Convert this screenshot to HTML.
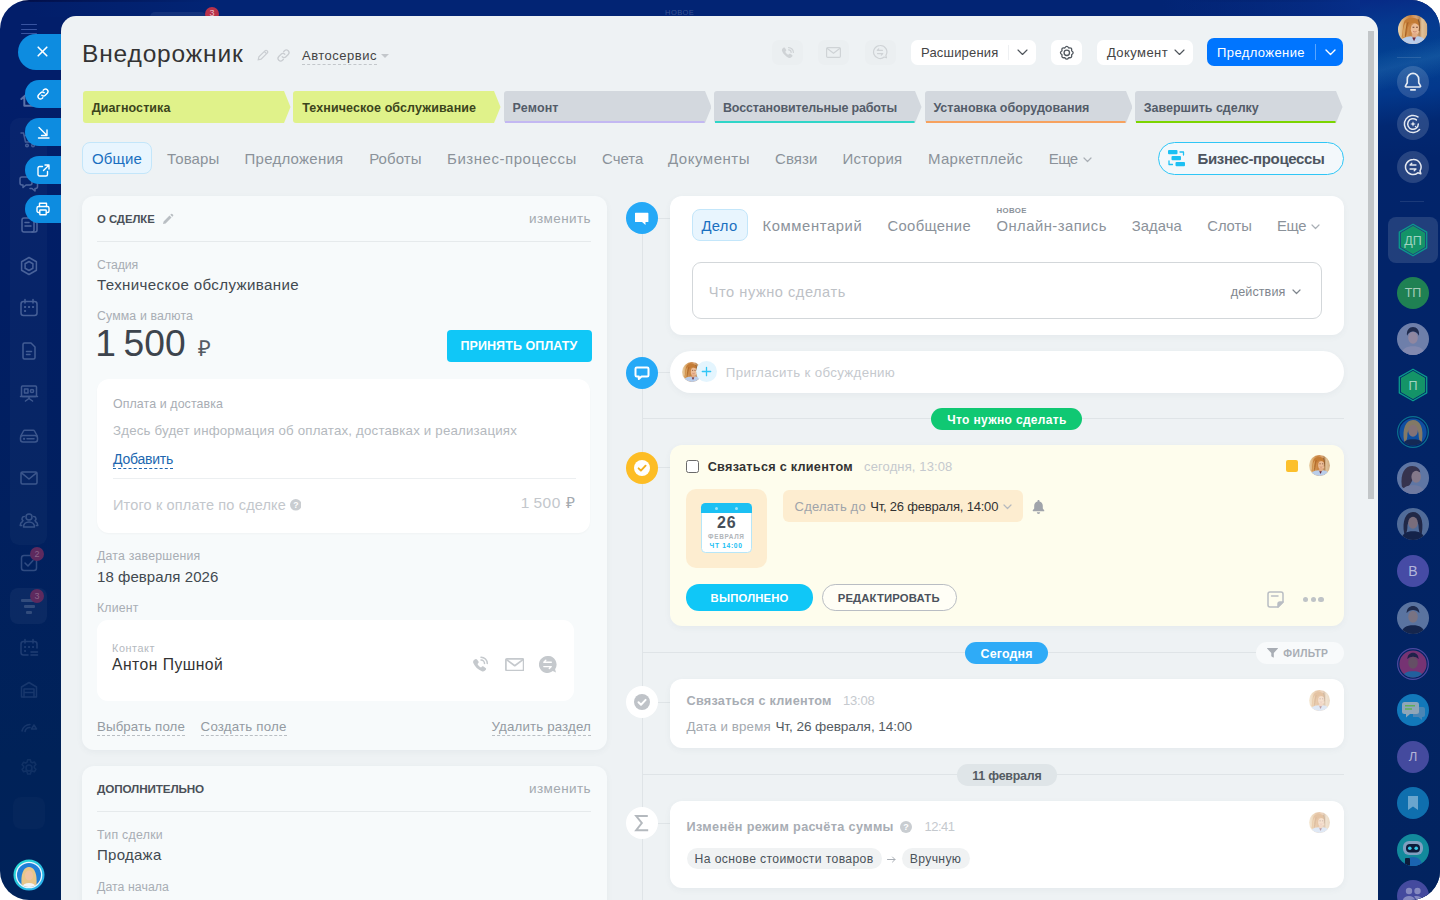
<!DOCTYPE html>
<html lang="ru">
<head>
<meta charset="utf-8">
<title>Внедорожник</title>
<style>
*{box-sizing:border-box;margin:0;padding:0}
html,body{width:1440px;height:900px;overflow:hidden;background:#fff;font-family:"Liberation Sans",sans-serif;}
.a{position:absolute}
.t{position:absolute;white-space:nowrap;line-height:1}
#shell{position:absolute;left:0;top:0;width:1440px;height:900px;border-radius:29px;overflow:hidden;
 background:linear-gradient(180deg,#020f4a 0,#020f4a 1px,#021e6a 2.500px,#021e6a 100px,#011e64 300px,#01205f 520px,#002258 760px,#00225a 900px);}
#rside{position:absolute;left:1360px;top:0;width:80px;height:900px;
 background:linear-gradient(166deg,rgba(255,255,255,0) 6.200%,rgba(90,170,220,.17) 8.200%,rgba(255,255,255,0) 10.500%),linear-gradient(174deg,#072a86 0,#053a90 28px,#024191 62px,#03388c 96px,#022872 128px,#02246b 165px,#022467 400px,#02235f 900px);}
#panel{position:absolute;left:61px;top:16px;width:1317px;height:900px;background:#eef2f4;border-radius:15px 15px 0 0;overflow:hidden}
/* everything inside panel positioned in page coords via offset wrapper */
#pin{position:absolute;left:-61px;top:-16px;width:1440px;height:900px}
.card{position:absolute;border-radius:12px}
.lcard{background:#f7fafb}
.wcard{background:#fff}
.lbl{color:#a8adb4;font-size:12.5px}
.val{color:#333;font-size:15px}
.dash{border-bottom:1px dashed currentColor}
</style>
</head>
<body>
<div id="shell">
<div class="a" style="left:10px;top:118px;width:37px;height:427px;background:rgba(255,255,255,.028);border-radius:9px;"></div>
<div class="a" style="left:30px;top:0;width:1360px;height:17px;background:linear-gradient(90deg,rgba(2,36,116,0),#022474 180px,#022474 1150px,rgba(2,36,116,0)),linear-gradient(180deg,#020f4a 0,#020f4a 1px,rgba(2,15,74,0) 2.500px)"></div>
<div class="a" style="left:1162px;top:0;width:198px;height:17px;background:linear-gradient(90deg,rgba(6,46,137,0),#062e89)"></div>
<div class="a" style="left:150px;top:11.5px;width:56px;height:10px;background:rgba(255,255,255,.07);border-radius:5px;"></div>
<div class="a" style="left:205px;top:7px;width:14px;height:14px;border-radius:7px;background:#b8324a;color:rgba(255,255,255,.7);font-size:9px;line-height:13px;text-align:center">3</div>
<div class="t" style="left:665px;top:8.500px;font-size:7.500px;letter-spacing:.5px;color:rgba(255,255,255,.22)">НОВОЕ</div>
<div class="a" style="left:21px;top:23.9px;width:16px;height:1.1px;background:rgba(130,160,235,.42);border-radius:1px;"></div>
<div class="a" style="left:21px;top:28.5px;width:16px;height:1.1px;background:rgba(130,160,235,.42);border-radius:1px;"></div>
<div class="a" style="left:21px;top:33.1px;width:16px;height:1.1px;background:rgba(130,160,235,.42);border-radius:1px;"></div>
<svg class="a" style="left:20.0px;top:89.5px;opacity:0.5" width="18" height="18" viewBox="0 0 20 20" fill="none" stroke="#b5c8ea" stroke-width="2.2" stroke-linecap="round" stroke-linejoin="round"><path d="M1.500 10L10 2.500l8.500 7.500M4.800 8.500V17.500h10.400V8.500"/></svg>
<svg class="a" style="left:19.0px;top:130.0px;opacity:0.35" width="20" height="20" viewBox="0 0 20 20" fill="none" stroke="#b5c8ea" stroke-width="1.5" stroke-linecap="round" stroke-linejoin="round"><path d="M2 3h2.500l2 9h9l1.500-6.500H6"/><circle cx="8" cy="15.500" r="1.300"/><circle cx="14" cy="15.500" r="1.300"/></svg>
<svg class="a" style="left:19.0px;top:173.0px;opacity:0.4" width="20" height="20" viewBox="0 0 20 20" fill="none" stroke="#b5c8ea" stroke-width="1.5" stroke-linecap="round" stroke-linejoin="round"><path d="M3 4h8a2 2 0 0 1 2 2v4a2 2 0 0 1-2 2H7l-3 2.500V12H3a2 2 0 0 1-2-2V6a2 2 0 0 1 2-2z"/><path d="M15 8h1.500a2 2 0 0 1 2 2v3.500a2 2 0 0 1-2 2h-.5V18l-3-2.500h-2"/></svg>
<svg class="a" style="left:19.0px;top:215.0px;opacity:0.4" width="20" height="20" viewBox="0 0 20 20" fill="none" stroke="#b5c8ea" stroke-width="1.5" stroke-linecap="round" stroke-linejoin="round"><rect x="3" y="3" width="12" height="14" rx="2"/><path d="M6 7.500h4M6 11h6M15 7h1.500a1.500 1.500 0 0 1 1.500 1.500V15a2 2 0 0 1-2 2h-3"/></svg>
<svg class="a" style="left:19.0px;top:256.0px;opacity:0.38" width="20" height="20" viewBox="0 0 20 20" fill="none" stroke="#b5c8ea" stroke-width="1.5" stroke-linecap="round" stroke-linejoin="round"><path d="M10 1.500l7.400 4.250v8.500L10 18.500l-7.400-4.250v-8.500z"/><path d="M10 5.500l3.900 2.250v4.500L10 14.500l-3.900-2.250v-4.500z"/></svg>
<svg class="a" style="left:19.0px;top:298.0px;opacity:0.36" width="20" height="20" viewBox="0 0 20 20" fill="none" stroke="#b5c8ea" stroke-width="1.5" stroke-linecap="round" stroke-linejoin="round"><rect x="2" y="3.500" width="16" height="14" rx="2.500"/><path d="M6 1.500v3.500M14 1.500v3.500"/><path d="M6 9h.1M10 9h.1M14 9h.1M6 13h.1" stroke-width="2.200"/></svg>
<svg class="a" style="left:19.0px;top:341.0px;opacity:0.34" width="20" height="20" viewBox="0 0 20 20" fill="none" stroke="#b5c8ea" stroke-width="1.5" stroke-linecap="round" stroke-linejoin="round"><path d="M5.500 2h6.500l4 4v10.500a1.500 1.500 0 0 1-1.500 1.500h-9A1.500 1.500 0 0 1 4 16.500v-13A1.500 1.500 0 0 1 5.500 2z"/><path d="M7.500 10.500h5M7.500 13.500h3.500"/></svg>
<svg class="a" style="left:19.0px;top:383.0px;opacity:0.32" width="20" height="20" viewBox="0 0 20 20" fill="none" stroke="#b5c8ea" stroke-width="1.5" stroke-linecap="round" stroke-linejoin="round"><rect x="2.500" y="3" width="15" height="10.500" rx="1"/><path d="M1.500 13.500h17M10 13.500v2M6.500 18l3.500-2.500 3.500 2.500"/><rect x="5.500" y="6" width="3.500" height="4"/><circle cx="13" cy="8" r="1.600"/></svg>
<svg class="a" style="left:19.0px;top:426.0px;opacity:0.3" width="20" height="20" viewBox="0 0 20 20" fill="none" stroke="#b5c8ea" stroke-width="1.5" stroke-linecap="round" stroke-linejoin="round"><path d="M2 9.500l2.500-4.500a1.500 1.500 0 0 1 1.300-.8h8.400a1.500 1.500 0 0 1 1.300.8L18 9.500"/><rect x="1.500" y="9.500" width="17" height="6.500" rx="2.500"/><path d="M5 12.800h.1" stroke-width="2.200"/><path d="M8 12.800h7"/></svg>
<svg class="a" style="left:19.0px;top:468.0px;opacity:0.3" width="20" height="20" viewBox="0 0 20 20" fill="none" stroke="#b5c8ea" stroke-width="1.5" stroke-linecap="round" stroke-linejoin="round"><rect x="2" y="4" width="16" height="12" rx="1.500"/><path d="M2.500 4.800L10 11l7.500-6.200"/></svg>
<svg class="a" style="left:19.0px;top:510.0px;opacity:0.28" width="20" height="20" viewBox="0 0 20 20" fill="none" stroke="#b5c8ea" stroke-width="1.5" stroke-linecap="round" stroke-linejoin="round"><circle cx="10" cy="7" r="3"/><path d="M4.500 17c0-3 2.400-5 5.500-5s5.500 2 5.500 5z"/><path d="M5.300 6.500A2.300 2.300 0 0 0 4 10.700M3.500 11.500c-1.500.8-2.300 2.200-2.300 4h1.500M14.700 6.500a2.300 2.300 0 0 1 1.300 4.200M16.500 11.500c1.500.8 2.300 2.200 2.300 4h-1.500"/></svg>
<svg class="a" style="left:19.0px;top:553.0px;opacity:0.26" width="20" height="20" viewBox="0 0 20 20" fill="none" stroke="#b5c8ea" stroke-width="1.5" stroke-linecap="round" stroke-linejoin="round"><rect x="2.500" y="2.500" width="15" height="15" rx="2.500"/><path d="M6 10l3 3 5-5.500"/></svg>
<div class="a" style="left:30px;top:546.500px;width:14px;height:14px;border-radius:7px;background:#5e2a5e;color:rgba(255,255,255,.28);font-size:9px;line-height:14px;text-align:center">2</div>
<div class="a" style="left:10.3px;top:587.5px;width:37.2px;height:36px;background:rgba(255,255,255,.045);border-radius:8px;"></div>
<div class="a" style="left:21px;top:599.2px;width:16px;height:2.4px;background:rgba(255,255,255,.16);border-radius:1px;"></div>
<div class="a" style="left:23.5px;top:605.2px;width:11px;height:2.4px;background:rgba(255,255,255,.16);border-radius:1px;"></div>
<div class="a" style="left:26px;top:611.2px;width:6px;height:2.4px;background:rgba(255,255,255,.16);border-radius:1px;"></div>
<div class="a" style="left:30px;top:589px;width:14px;height:14px;border-radius:7px;background:#5e2a5e;color:rgba(255,255,255,.28);font-size:9px;line-height:14px;text-align:center">3</div>
<svg class="a" style="left:19.0px;top:638.0px;opacity:0.17" width="20" height="20" viewBox="0 0 20 20" fill="none" stroke="#b5c8ea" stroke-width="1.5" stroke-linecap="round" stroke-linejoin="round"><path d="M9 17H4.500A2.500 2.500 0 0 1 2 14.500V6a2.500 2.500 0 0 1 2.500-2.500h11A2.500 2.500 0 0 1 18 6v4"/><path d="M6 1.500v3.500M14 1.500v3.500M12 14h6.500M12 17h6.500"/><path d="M6 9h.1M10 9h.1M14 9h.1M6 13h.1" stroke-width="2"/></svg>
<svg class="a" style="left:19.0px;top:680.0px;opacity:0.13" width="20" height="20" viewBox="0 0 20 20" fill="none" stroke="#b5c8ea" stroke-width="1.5" stroke-linecap="round" stroke-linejoin="round"><path d="M2.500 17V7L10 2.500 17.500 7v10z"/><path d="M5 17V9h10v8M5 12.500h10"/></svg>
<svg class="a" style="left:19.0px;top:717.0px;opacity:0.12" width="20" height="20" viewBox="0 0 20 20" fill="none" stroke="#b5c8ea" stroke-width="1.5" stroke-linecap="round" stroke-linejoin="round"><path d="M3 14a8 8 0 0 1 8-6.500M6 14.500a5 5 0 0 1 5-4"/><path d="M15 8l-2.500 4h5z"/></svg>
<svg class="a" style="left:19.0px;top:758.0px;opacity:0.09" width="20" height="20" viewBox="0 0 20 20" fill="none" stroke="#b5c8ea" stroke-width="1.5" stroke-linecap="round" stroke-linejoin="round"><circle cx="10" cy="10" r="3"/><path d="M8.600 1.800h2.800l.5 2.200 1.400.8 2.100-.8 1.500 2.500-1.600 1.500v1.800l1.600 1.500-1.500 2.500-2.100-.8-1.400.8-.5 2.200H8.600l-.5-2.200-1.400-.8-2.100.8-1.500-2.500 1.600-1.500V8.200L3.100 6.700l1.500-2.500 2.100.8 1.400-.8z"/></svg>
<div class="a" style="left:13px;top:797px;width:32px;height:32px;background:rgba(255,255,255,.02);border-radius:8px;"></div>
<svg class="a" style="left:13px;top:858.500px" width="32" height="32" viewBox="0 0 32 32"><defs><clipPath id="lav"><circle cx="16" cy="16" r="12"/></clipPath><linearGradient id="lring" x1="0" y1="0" x2="1" y2="1"><stop offset="0" stop-color="#27e0d0"/><stop offset="1" stop-color="#2aa8f0"/></linearGradient></defs><circle cx="16" cy="16" r="15.500" fill="url(#lring)"/><circle cx="16" cy="16" r="13.300" fill="#eaf6ff"/><g clip-path="url(#lav)"><rect width="32" height="32" fill="#1f7fd8"/><path d="M9 30C7 16 10 8 16 8s9 8 7 22z" fill="#e8c68a"/><ellipse cx="16" cy="16.500" rx="4" ry="5" fill="#efc3a2"/><path d="M8 32c0-5 3-8 8-8s8 3 8 8z" fill="#f4f4f6"/></g></svg>

<div id="rside"><svg class="a" style="left:38.40px;top:14.60px;opacity:1;border-radius:50%;overflow:hidden" width="29.2" height="29.2" viewBox="0 0 40 40"><defs><filter id="gb1" x="-20%" y="-20%" width="140%" height="140%"><feGaussianBlur stdDeviation="0.65"/></filter><linearGradient id="gg1" x1="0" x2="1" y1="0" y2="0"><stop offset="0" stop-color="#ead3ad"/><stop offset=".18" stop-color="#dcae72"/><stop offset=".42" stop-color="#c9823f"/><stop offset=".62" stop-color="#d9a473"/><stop offset=".74" stop-color="#b98a5a"/><stop offset=".82" stop-color="#e0c29a"/><stop offset="1" stop-color="#d2ad80"/></linearGradient></defs><rect width="40" height="40" fill="url(#gg1)"/><g filter="url(#gb1)"><path d="M9 8c4-5 14-6 19-1 2 3 2 8 1 12l-3-6c-3-3-8-3-11 1-2 4-2 9-3 14-1 3-5 4-7 2 2-6 1-15 4-22z" fill="#c47b36"/><path d="M6 30c1-8 1-16 5-20 1 6-1 14 1 21z" fill="#d9a35f"/><ellipse cx="23.500" cy="19.500" rx="6" ry="7.800" fill="#ecbd97"/><path d="M19.500 25h7v6h-7z" fill="#e2ac86"/><path d="M2 41c1-8 7-11.500 16-12l4 3 5-3c7 .5 11 4 12 12z" fill="#b9cdea"/><path d="M19.500 31l2.500 5 2.500-5z" fill="#6a2a40"/><path d="M20.500 22.300c1.500 1.200 3.500 1.200 5 0" stroke="#b5655a" stroke-width=".9" fill="none"/><path d="M20 16.800h2.400M24.800 16.800h2.400" stroke="#6a4030" stroke-width="1.300"/><path d="M27.500 6c2 4 2.500 10 1.500 16" stroke="#8a5a30" stroke-width="1.600" fill="none"/><path d="M14 10c-3 5-3 12-4 20" stroke="#a86428" stroke-width="1.500" fill="none"/></g></svg>
<div class="a" style="left:36.5px;top:57px;width:24px;height:1px;background:rgba(255,255,255,.12);border-radius:0px;"></div>
<div class="a" style="left:37px;top:66px;width:32px;height:32px;background:rgba(255,255,255,.15);border-radius:16px;"></div>
<svg class="a" style="left:42px;top:70.500px" width="22" height="22" viewBox="0 0 20 20" stroke="rgba(255,255,255,.88)" fill="none" stroke-width="1.500" stroke-linecap="round" stroke-linejoin="round"><path d="M10 2.200a5.200 5.200 0 0 0-5.200 5.200v3.300L3.200 13.500c-.3.500 0 1 .6 1h12.400c.6 0 .9-.5.600-1l-1.600-2.800V7.400A5.200 5.200 0 0 0 10 2.200zM8 17.200h4"/></svg>
<div class="a" style="left:37px;top:108.2px;width:32px;height:32px;background:rgba(255,255,255,.15);border-radius:16px;"></div>
<svg class="a" style="left:41px;top:112.200px" width="24" height="24" viewBox="0 0 24 24" stroke="rgba(255,255,255,.88)" fill="none" stroke-width="1.500" stroke-linecap="round" stroke-linejoin="round"><path d="M16.930 4.960A8.600 8.600 0 1 0 18.590 17.530"/><path d="M15.410 7.940A5.300 5.300 0 1 0 17.300 12"/><path d="M12 9.200l.8 2 2 .8-2 .8-.8 2-.8-2-2-.8 2-.8z" fill="rgba(255,255,255,.88)" stroke="none"/><circle cx="14.500" cy="14.400" r=".75" fill="rgba(255,255,255,.88)" stroke="none"/></svg>
<div class="a" style="left:37px;top:150.7px;width:32px;height:32px;background:rgba(255,255,255,.15);border-radius:16px;"></div>
<svg class="a" style="left:43px;top:156.700px" width="20" height="20" viewBox="0 0 20 20" stroke="rgba(255,255,255,.88)" fill="none" stroke-width="1.500" stroke-linecap="round" stroke-linejoin="round"><path d="M10 2.500a7.500 7.500 0 1 0 4.800 13.300l3 1-.8-3A7.500 7.500 0 0 0 10 2.500z"/><path d="M13 8H7l1.800-1.800M7 12h6l-1.800 1.800" stroke-width="1.300"/></svg>
<div class="a" style="left:40px;top:201px;width:24px;height:1px;background:rgba(255,255,255,.1);border-radius:0px;"></div>
<div class="a" style="left:28px;top:216.7px;width:49.7px;height:46.6px;background:rgba(255,255,255,.125);border-radius:8px;"></div>
<svg class="a" style="left:36px;top:223px" width="34" height="34" viewBox="0 0 34 34"><path d="M17 1.200l13.700 7.900v15.800L17 32.800 3.300 24.900V9.100z" fill="none" stroke="#0b9a8c" stroke-width="1.300" stroke-linejoin="round"/><path d="M17 4.600l10.700 6.200v12.400L17 29.400 6.300 23.200V10.800z" fill="#149468" stroke="#149468" stroke-width="3" stroke-linejoin="round"/><text x="17" y="21.500" font-size="12.500" text-anchor="middle" fill="rgba(255,255,255,.6)" font-family="Liberation Sans, sans-serif">ДП</text></svg>
<div class="a" style="left:37px;top:276.5px;width:32px;height:32px;border-radius:16px;background:#1f8153;color:rgba(255,255,255,.6);font-size:12.5px;line-height:32px;text-align:center">ТП</div>
<svg class="a" style="left:37px;top:323.2px;opacity:0.72" width="32" height="32" viewBox="0 0 40 40"><defs><clipPath id="r1"><circle cx="20" cy="20" r="20"/></clipPath></defs><g clip-path="url(#r1)"><rect width="40" height="40" fill="#98a2c4"/><path d="M12.500 16c-1-7 3-11 7.500-11s8.500 4 7.500 11c-2-4-4.500-5.500-7.500-5.500s-5.500 1.500-7.500 5.500z" fill="#2b2e45"/><ellipse cx="20" cy="18.500" rx="6" ry="7.500" fill="#c7aeb6"/><path d="M5 40c1-8 7-11 15-11s14 3 15 11z" fill="#b4b0cb"/></g></svg>
<svg class="a" style="left:36px;top:368.3px" width="34" height="34" viewBox="0 0 34 34"><path d="M17 1.200l13.700 7.900v15.800L17 32.800 3.300 24.900V9.100z" fill="none" stroke="#0b9a8c" stroke-width="1.300" stroke-linejoin="round"/><path d="M17 4.600l10.700 6.200v12.400L17 29.400 6.300 23.200V10.800z" fill="#149468" stroke="#149468" stroke-width="3" stroke-linejoin="round"/><text x="17" y="21.500" font-size="12.500" text-anchor="middle" fill="rgba(255,255,255,.6)" font-family="Liberation Sans, sans-serif">П</text></svg>
<svg class="a" style="left:37px;top:415.7px;opacity:0.72" width="32" height="32" viewBox="0 0 40 40"><defs><clipPath id="r2"><circle cx="20" cy="20" r="17"/></clipPath></defs><circle cx="20" cy="20" r="19.200" fill="none" stroke="#0e8fa0" stroke-width="1.500"/><g clip-path="url(#r2)"><rect width="40" height="40" fill="#1560b8"/><path d="M9 32C6 16 11 5 20 5s14 10 11 27c-2 3-4-4-4-9 0-5-3-8-7-8s-7 3-7 9c0 4-2 11-4 8z" fill="#b59a66"/><ellipse cx="20" cy="18.500" rx="6" ry="7.500" fill="#b5917e"/><path d="M5 40c1-8 7-11 15-11s14 3 15 11z" fill="#1b2c4f"/></g></svg>
<svg class="a" style="left:37px;top:462px;opacity:0.72" width="32" height="32" viewBox="0 0 40 40"><defs><clipPath id="r3"><circle cx="20" cy="20" r="20"/></clipPath></defs><g clip-path="url(#r3)"><rect width="40" height="40" fill="#8496bd"/><path d="M6 30C4 14 10 5 19 5c6 0 10 4 10 8-3-1-7 0-8 4-1 5-3 9-6 13-3 3-8 4-9 0z" fill="#4a3a45"/><ellipse cx="24" cy="18.500" rx="6" ry="7.500" fill="#b79a98"/><path d="M5 40c1-8 7-11 15-11s14 3 15 11z" fill="#9a9cb8"/></g></svg>
<svg class="a" style="left:37px;top:508.20000000000005px;opacity:0.72" width="32" height="32" viewBox="0 0 40 40"><defs><clipPath id="r4"><circle cx="20" cy="20" r="20"/></clipPath></defs><g clip-path="url(#r4)"><rect width="40" height="40" fill="#7088ae"/><path d="M9 32C6 16 11 5 20 5s14 10 11 27c-2 3-4-4-4-9 0-5-3-8-7-8s-7 3-7 9c0 4-2 11-4 8z" fill="#2e2a3c"/><ellipse cx="20" cy="18.500" rx="6" ry="7.500" fill="#a98a86"/><path d="M5 40c1-8 7-11 15-11s14 3 15 11z" fill="#1c2340"/></g></svg>
<div class="a" style="left:37px;top:554.8px;width:32px;height:32px;border-radius:16px;background:#464ba5;color:rgba(255,255,255,.6);font-size:14px;line-height:32px;text-align:center">В</div>
<svg class="a" style="left:37px;top:601.5px;opacity:0.72" width="32" height="32" viewBox="0 0 40 40"><defs><clipPath id="r5"><circle cx="20" cy="20" r="20"/></clipPath></defs><g clip-path="url(#r5)"><rect width="40" height="40" fill="#7d93b8"/><path d="M12 14c0-6 4-9 8-9s8 3 8 9c-2-3-5-4-8-4s-6 1-8 4z" fill="#2b2f45"/><ellipse cx="20" cy="18.500" rx="6" ry="7.500" fill="#a8928f"/><path d="M5 40c1-8 7-11 15-11s14 3 15 11z" fill="#1d2745"/></g></svg>
<svg class="a" style="left:37px;top:647.7px;opacity:0.72" width="32" height="32" viewBox="0 0 40 40"><defs><clipPath id="r6"><circle cx="20" cy="20" r="17"/></clipPath></defs><circle cx="20" cy="20" r="19.200" fill="none" stroke="#6b56b8" stroke-width="1.500"/><g clip-path="url(#r6)"><rect width="40" height="40" fill="#a33a7a"/><path d="M13 14c0-5 3-8 7-8s7 3 7 8c-2-2-4-3-7-3s-5 1-7 3z" fill="#2a2240"/><ellipse cx="20" cy="18.500" rx="6" ry="7.500" fill="#8a5f66"/><path d="M5 40c1-8 7-11 15-11s14 3 15 11z" fill="#2f78b5"/></g></svg>
<svg class="a" style="left:37px;top:694px" width="32" height="32" viewBox="0 0 32 32"><circle cx="16" cy="16" r="16" fill="#1278ba"/><path d="M16 13h10a2 2 0 0 1 2 2v6a2 2 0 0 1-2 2h-1v3l-3.500-3H16z" fill="#4a86b5"/><rect x="5" y="8" width="17" height="12" rx="2.500" fill="#8fa6b8"/><path d="M9 20v3.500l4-3.500z" fill="#8fa6b8"/><path d="M8 11.800h10M8 15h7" stroke="#5fae5a" stroke-width="1.600"/></svg>
<div class="a" style="left:37px;top:740.5px;width:32px;height:32px;border-radius:16px;background:#444a9e;color:rgba(255,255,255,.6);font-size:13px;line-height:32px;text-align:center">Л</div>
<svg class="a" style="left:37px;top:786.8px" width="32" height="32" viewBox="0 0 32 32"><circle cx="16" cy="16" r="16" fill="#0f6fae"/><path d="M11 9h10v14l-5-3.500-5 3.500z" fill="rgba(255,255,255,.38)"/></svg>
<svg class="a" style="left:37px;top:833.5px" width="32" height="32" viewBox="0 0 32 32"><defs><clipPath id="rb"><circle cx="16" cy="16" r="16"/></clipPath></defs><g clip-path="url(#rb)"><rect width="32" height="32" fill="#128a9c"/><rect x="6" y="7" width="20" height="14" rx="6" fill="#7f9fc0"/><rect x="9" y="10" width="14" height="8.500" rx="4" fill="#0d1b3a"/><circle cx="12.800" cy="14.200" r="1.800" fill="#35c8e8"/><circle cx="19.200" cy="14.200" r="1.800" fill="#35c8e8"/><path d="M7 32c0-6 4-9 9-9s9 3 9 9z" fill="#1a63b0"/><rect x="8" y="24" width="5" height="8" rx="1" fill="#0d1b3a"/></g></svg>
<svg class="a" style="left:37px;top:880.4px" width="32" height="32" viewBox="0 0 32 32"><circle cx="16" cy="16" r="16" fill="#444a9e"/><g fill="rgba(255,255,255,.35)"><circle cx="12" cy="11" r="3.200"/><circle cx="20.500" cy="11" r="3.200"/><path d="M5.500 22c0-4 3-6 6.500-6s6.500 2 6.500 6zM17 16.500c4-1.500 9 .5 9 5.500h-6.500c0-2.500-1-4.300-2.500-5.500z"/></g></svg>
</div>
<div class="a" style="left:18px;top:33.8px;width:60px;height:35.8px;background:#0d8ce0;border-radius:18px;"></div>
<svg class="a" style="left:36.500px;top:46px" width="11" height="11" viewBox="0 0 11 11" stroke="#fff" stroke-width="1.600" stroke-linecap="round"><path d="M1.200 1.200l8.600 8.600M9.800 1.200L1.200 9.800"/></svg>
<div class="a" style="left:25px;top:80px;width:50px;height:28px;background:#0d8ce0;border-radius:14px;"></div>
<div class="a" style="left:25px;top:118px;width:50px;height:28px;background:#0d8ce0;border-radius:14px;"></div>
<div class="a" style="left:25px;top:156.3px;width:50px;height:28px;background:#0d8ce0;border-radius:14px;"></div>
<div class="a" style="left:25px;top:194.8px;width:50px;height:28px;background:#0d8ce0;border-radius:14px;"></div>
<svg class="a" style="left:36px;top:87px" width="14" height="14" viewBox="0 0 14 14" fill="none" stroke="#fff" stroke-width="1.400" stroke-linecap="round"><path d="M5.800 8.200a2.500 2.500 0 0 0 3.500 0l2.200-2.200A2.500 2.500 0 0 0 8 2.500l-.8.800"/><path d="M8.200 5.800a2.500 2.500 0 0 0-3.500 0L2.500 8A2.500 2.500 0 0 0 6 11.500l.8-.8"/></svg>
<svg class="a" style="left:36.500px;top:125.500px" width="13" height="13" viewBox="0 0 13 13" fill="none" stroke="#fff" stroke-width="1.400" stroke-linecap="round" stroke-linejoin="round"><path d="M2 1.500l8 8M4.500 9.500H10V4M1.500 12h10.500"/></svg>
<svg class="a" style="left:36.500px;top:163.500px" width="13" height="13" viewBox="0 0 13 13" fill="none" stroke="#fff" stroke-width="1.400" stroke-linecap="round" stroke-linejoin="round"><path d="M10.500 7.500v3a1.500 1.500 0 0 1-1.500 1.500H2.500A1.500 1.500 0 0 1 1 10.500V4a1.500 1.500 0 0 1 1.500-1.500h3"/><path d="M8 1h4v4M12 1L6.500 6.500"/></svg>
<svg class="a" style="left:36px;top:201.500px" width="14" height="14" viewBox="0 0 14 14" fill="none" stroke="#fff" stroke-width="1.400" stroke-linecap="round" stroke-linejoin="round"><path d="M3.500 4.500V1.200h7v3.300"/><rect x="1" y="4.500" width="12" height="6" rx="1.500"/><rect x="3.800" y="8" width="6.400" height="4.800" rx=".5" fill="#0d8ce0"/></svg>

<div id="panel"><div id="pin">
<div class="t" id="title" style="left:82px;top:41.50px;font-size:24.5px;color:#333;--w:161.500;letter-spacing:0.847px">Внедорожник</div>
<svg class="a" style="left:256px;top:48px" width="14" height="14" viewBox="0 0 14 14" fill="none" stroke="#c9cdd1" stroke-width="1.2"><path d="M2.2 11.8l.7-2.9 6.3-6.3a1.2 1.2 0 0 1 1.7 0l.5.5a1.2 1.2 0 0 1 0 1.7l-6.3 6.3z"/><path d="M8.3 3.5l2.2 2.2"/></svg>
<svg class="a" style="left:276px;top:48px" width="15" height="15" viewBox="0 0 15 15" fill="none" stroke="#c9cdd1" stroke-width="1.3" stroke-linecap="round"><path d="M6.2 8.8a2.6 2.6 0 0 0 3.7 0l2.3-2.3a2.6 2.6 0 0 0-3.7-3.7l-.9.9"/><path d="M8.8 6.2a2.6 2.6 0 0 0-3.7 0L2.8 8.5a2.6 2.6 0 0 0 3.7 3.7l.9-.9"/></svg>
<div class="t" id="autos" style="--w:75;left:302px;top:49.25px;font-size:13.0px;color:#444;border-bottom:1px dashed #c3c7cb;padding-bottom:2px;letter-spacing:0.503px">Автосервис</div>
<div class="a" style="left:381px;top:54px;width:0;height:0;border-left:4px solid transparent;border-right:4px solid transparent;border-top:4px solid #c3c7cb"></div>
<!-- ghost buttons -->
<div class="a" style="left:772px;top:39.700px;width:31px;height:25.400px;border-radius:6.500px;background:#ebeff1"></div>
<div class="a" style="left:818px;top:39.700px;width:31px;height:25.400px;border-radius:6.500px;background:#ebeff1"></div>
<div class="a" style="left:865px;top:39.700px;width:31px;height:25.400px;border-radius:6.500px;background:#ebeff1"></div>
<svg class="a" style="left:779.500px;top:45.500px" width="15" height="15" viewBox="0 0 14 14" fill="#cfd3d6"><path d="M3.2 1.6c.4-.4 1-.3 1.300.1l1.200 1.700c.3.400.2.900-.1 1.200l-.7.700c.6 1.200 1.600 2.200 2.800 2.800l.7-.7c.3-.3.800-.4 1.200-.1l1.700 1.200c.4.300.5.900.1 1.300l-.8.800c-.6.600-1.500.8-2.300.5C5.500 10 3 7.500 1.900 4.700c-.3-.8-.1-1.700.5-2.300z"/><path d="M8 1.500a4.500 4.500 0 0 1 4.500 4.500M8 3.600a2.400 2.400 0 0 1 2.400 2.400" fill="none" stroke="#cfd3d6" stroke-width="1.100" stroke-linecap="round"/></svg>
<svg class="a" style="left:826px;top:47px" width="15" height="11" viewBox="0 0 15 11" fill="none" stroke="#cfd3d6" stroke-width="1.200"><rect x=".6" y=".6" width="13.800" height="9.800" rx="1.200"/><path d="M1 1.200l6.500 5 6.500-5"/></svg>
<svg class="a" style="left:872px;top:44px" width="16" height="16" viewBox="0 0 16 16" fill="none" stroke="#cfd3d6" stroke-width="1.200" stroke-linecap="round" stroke-linejoin="round"><path d="M8 1.500a6.500 6.500 0 1 0 4.200 11.500l2.300.8-.6-2.400A6.500 6.500 0 0 0 8 1.500z"/><path d="M10.500 6.300H5.200l1.500-1.500M5.500 9.600h5.300l-1.500 1.500"/></svg>
<!-- Расширения -->
<div class="a" style="left:911px;top:39.500px;width:125px;height:25.700px;border-radius:6.500px;background:#fff"></div>
<div class="t" id="rassh" style="left:921px;top:46.25px;font-size:13.0px;color:#444;--w:77.500;letter-spacing:0.189px">Расширения</div>
<div class="a" style="left:1008px;top:45px;width:1px;height:15px;background:#eef0f2"></div>
<svg class="a" style="left:1017px;top:49px" width="11" height="7" viewBox="0 0 11 7" fill="none" stroke="#4f555b" stroke-width="1.150" stroke-linecap="round" stroke-linejoin="round"><path d="M1 1l4.500 4.500L10 1"/></svg>
<!-- gear -->
<div class="a" style="left:1051px;top:39.700px;width:31px;height:25.400px;border-radius:6.500px;background:#fff"></div>
<svg class="a" style="left:1057.800px;top:43.700px" width="17.600" height="17.600" viewBox="0 0 20 20" fill="none" stroke="#525960" stroke-width="1.500" stroke-linejoin="round"><circle cx="10" cy="10" r="3.100"/><path d="M7.74 4.55Q10.00 1.00 12.26 4.55Q16.36 3.64 15.45 7.74Q19.00 10.00 15.45 12.26Q16.36 16.36 12.26 15.45Q10.00 19.00 7.74 15.45Q3.64 16.36 4.55 12.26Q1.00 10.00 4.55 7.74Q3.64 3.64 7.74 4.55Z"/></svg>
<!-- Документ -->
<div class="a" style="left:1097.300px;top:39.500px;width:96px;height:25.700px;border-radius:6.500px;background:#fff"></div>
<div class="t" id="docum" style="left:1107px;top:46.25px;font-size:13.0px;color:#444;--w:61;letter-spacing:0.416px">Документ</div>
<svg class="a" style="left:1174px;top:49px" width="11" height="7" viewBox="0 0 11 7" fill="none" stroke="#4f555b" stroke-width="1.150" stroke-linecap="round" stroke-linejoin="round"><path d="M1 1l4.500 4.500L10 1"/></svg>
<!-- Предложение -->
<div class="a" style="left:1207px;top:38.400px;width:136.300px;height:27.800px;border-radius:7px;background:#0075ff"></div>
<div class="t" id="predl" style="left:1217px;top:46.25px;font-size:13.0px;color:#fff;--w:88;letter-spacing:0.406px">Предложение</div>
<div class="a" style="left:1315px;top:44px;width:1px;height:16px;background:rgba(255,255,255,.35)"></div>
<svg class="a" style="left:1325px;top:49px" width="11" height="7" viewBox="0 0 11 7" fill="none" stroke="#fff" stroke-width="1.400" stroke-linecap="round" stroke-linejoin="round"><path d="M1 1l4.500 4.500L10 1"/></svg>
<!-- STAGES -->
<svg class="a" style="left:83.0px;top:91px" width="207.5" height="32" viewBox="0 0 207.5 32"><path d="M3 0H201.0L207.5 16L201.0 32H3A3 3 0 0 1 0 29V3A3 3 0 0 1 3 0Z" fill="#e0f28a"/></svg>
<div class="t" style="left:91.8px;top:102.00px;font-size:12.5px;font-weight:700;color:#3c451c;--w:78.7;letter-spacing:0.088px">Диагностика</div>
<svg class="a" style="left:293.4px;top:91px" width="207.5" height="32" viewBox="0 0 207.5 32"><path d="M3 0H201.0L207.5 16L201.0 32H3A3 3 0 0 1 0 29V3A3 3 0 0 1 3 0Z" fill="#e0f28a"/></svg>
<div class="t" style="left:302.2px;top:102.00px;font-size:12.5px;font-weight:700;color:#3c451c;--w:174;letter-spacing:0.109px">Техническое обслуживание</div>
<svg class="a" style="left:503.8px;top:91px" width="207.5" height="32" viewBox="0 0 207.5 32"><path d="M3 0H201.0L207.5 16L201.0 32H3A3 3 0 0 1 0 29V3A3 3 0 0 1 3 0Z" fill="#d3d8de"/><path d="M1 31H200.5" stroke="#c3b8f2" stroke-width="2" fill="none"/></svg>
<div class="t" style="left:512.6px;top:102.00px;font-size:12.5px;font-weight:700;color:#535c69;--w:46;letter-spacing:0.133px">Ремонт</div>
<svg class="a" style="left:714.2px;top:91px" width="207.5" height="32" viewBox="0 0 207.5 32"><path d="M3 0H201.0L207.5 16L201.0 32H3A3 3 0 0 1 0 29V3A3 3 0 0 1 3 0Z" fill="#d3d8de"/><path d="M1 31H200.5" stroke="#2fd6c8" stroke-width="2" fill="none"/></svg>
<div class="t" style="left:723.0px;top:102.00px;font-size:12.5px;font-weight:700;color:#535c69;--w:174;letter-spacing:-0.159px">Восстановительные работы</div>
<svg class="a" style="left:924.6px;top:91px" width="207.5" height="32" viewBox="0 0 207.5 32"><path d="M3 0H201.0L207.5 16L201.0 32H3A3 3 0 0 1 0 29V3A3 3 0 0 1 3 0Z" fill="#d3d8de"/><path d="M1 31H200.5" stroke="#f7a25e" stroke-width="2" fill="none"/></svg>
<div class="t" style="left:933.4px;top:102.00px;font-size:12.5px;font-weight:700;color:#535c69;--w:156;letter-spacing:-0.011px">Установка оборудования</div>
<svg class="a" style="left:1135.0px;top:91px" width="207.5" height="32" viewBox="0 0 207.5 32"><path d="M3 0H201.0L207.5 16L201.0 32H3A3 3 0 0 1 0 29V3A3 3 0 0 1 3 0Z" fill="#d3d8de"/><path d="M1 31H200.5" stroke="#7bd500" stroke-width="2" fill="none"/></svg>
<div class="t" style="left:1143.8px;top:102.00px;font-size:12.5px;font-weight:700;color:#535c69;--w:115;letter-spacing:-0.017px">Завершить сделку</div>
<!-- TABS -->
<div class="a" style="left:82px;top:142px;width:70px;height:32px;border-radius:8px;background:#e8f5fe;border:1px solid #c3e6fa"></div>
<div class="t" style="left:92px;top:151.25px;font-size:15.0px;color:#1a6fc0;--w:50;letter-spacing:0.134px">Общие</div>
<div class="t" style="left:167px;top:151.25px;font-size:15.0px;color:#8b929a;--w:52.5;letter-spacing:0.148px">Товары</div>
<div class="t" style="left:244.5px;top:151.25px;font-size:15.0px;color:#8b929a;--w:99;letter-spacing:0.259px">Предложения</div>
<div class="t" style="left:369.2px;top:151.25px;font-size:15.0px;color:#8b929a;--w:52.5;letter-spacing:0.091px">Роботы</div>
<div class="t" style="left:447px;top:151.25px;font-size:15.0px;color:#8b929a;--w:129.8;letter-spacing:0.548px">Бизнес-процессы</div>
<div class="t" style="left:602px;top:151.25px;font-size:15.0px;color:#8b929a;--w:41.2;letter-spacing:-0.035px">Счета</div>
<div class="t" style="left:668px;top:151.25px;font-size:15.0px;color:#8b929a;--w:82;letter-spacing:0.519px">Документы</div>
<div class="t" style="left:775px;top:151.25px;font-size:15.0px;color:#8b929a;--w:42.5;letter-spacing:0.097px">Связи</div>
<div class="t" style="left:842.5px;top:151.25px;font-size:15.0px;color:#8b929a;--w:60;letter-spacing:0.261px">История</div>
<div class="t" style="left:928px;top:151.25px;font-size:15.0px;color:#8b929a;--w:95;letter-spacing:0.283px">Маркетплейс</div>
<div class="t" style="left:1048.8px;top:151.25px;font-size:15.0px;color:#8b929a;--w:28.8;letter-spacing:-0.577px">Еще</div>
<svg class="a" style="left:1083px;top:157px" width="9" height="6" viewBox="0 0 9 6" fill="none" stroke="#a9afb5" stroke-width="1.200" stroke-linecap="round" stroke-linejoin="round"><path d="M1 1l3.500 3.500L8 1"/></svg>
<div class="a" style="left:1158px;top:142px;width:185.500px;height:32.500px;border-radius:17px;background:#f3f8fb;border:1.500px solid #2fc6f6"></div>
<svg class="a" style="left:1167px;top:150px" width="19" height="17" viewBox="0 0 19 17"><g fill="#1cc0f3"><rect x="1" y="0" width="9.500" height="4.300" rx="1"/><rect x="4.500" y="6" width="9.500" height="4.300" rx="1"/><rect x="8.500" y="12" width="9.500" height="4.300" rx="1"/></g><g fill="none" stroke="#1cc0f3" stroke-width="1.300" stroke-linecap="round" stroke-linejoin="round"><path d="M13 2h3.500v3"/><path d="M5.500 14.500H2v-3.500"/></g></svg>
<div class="t" style="left:1197.500px;top:151.25px;font-size:15.0px;font-weight:700;color:#4d5560;--w:127;letter-spacing:-0.350px">Бизнес-процессы</div>
<!-- scrollbar -->
<div class="a" style="left:1368px;top:30.500px;width:5.800px;height:468px;background:#c2c6c8"></div>

<div class="a" style="left:82px;top:196px;width:524.5px;height:554px;background:#f7fafb;border-radius:12px;box-shadow:0 2px 6px rgba(70,90,110,.055);"></div>
<div class="t" style="left:97px;top:213.60px;font-size:11.3px;color:#4a5058;font-weight:700;--w:57.7;letter-spacing:-0.022px">О СДЕЛКЕ</div>
<svg class="a" style="left:162px;top:213px" width="12" height="12" viewBox="0 0 12 12" fill="#b9bec3"><path d="M1 11l.6-2.600 5.900-5.900 2 2-5.900 5.900zM8.300 1.700l.8-.8a.8.8 0 0 1 1.100 0l.9.900a.8.8 0 0 1 0 1.100l-.8.8z"/></svg>
<div class="t" style="right:849px;top:212.00px;font-size:13.5px;color:#a3a9af;--w:62;letter-spacing:0.408px">изменить</div>
<div class="a" style="left:97px;top:240.5px;width:494px;height:1px;background:#e6eaec;border-radius:0px;"></div>
<div class="t" style="left:97px;top:259.10px;font-size:12.3px;color:#a8adb4;--w:41;letter-spacing:-0.154px">Стадия</div>
<div class="t" style="left:97px;top:277.20px;font-size:15.1px;color:#424950;--w:202;letter-spacing:0.367px">Техническое обслуживание</div>
<div class="t" style="left:97px;top:310.10px;font-size:12.3px;color:#a8adb4;--w:96;letter-spacing:0.140px">Сумма и валюта</div>
<div class="t" style="left:95.3px;top:324.65px;font-size:37.2px;color:#3d444d;--w:90.5;letter-spacing:0.062px">1&#8201;500</div>
<div class="t" style="left:198px;top:337.75px;font-size:22px;color:#555c63;--w:14;letter-spacing:1.000px">₽</div>
<div class="a" style="left:447px;top:329.5px;width:144.5px;height:32px;background:#10c7f7;border-radius:4px;"></div>
<div class="t" style="left:460.4px;top:340.00px;font-size:12.5px;color:#fff;font-weight:700;--w:117;letter-spacing:0.092px">ПРИНЯТЬ ОПЛАТУ</div>
<div class="a" style="left:97px;top:378.5px;width:493px;height:154px;background:#fff;border-radius:12px;box-shadow:0 1px 2px rgba(0,0,0,.03);"></div>
<div class="t" style="left:113px;top:398.05px;font-size:12.4px;color:#a8adb4;--w:110;letter-spacing:0.097px">Оплата и доставка</div>
<div class="t" style="left:113px;top:424.10px;font-size:13.3px;color:#b4b9be;--w:404;letter-spacing:0.174px">Здесь будет информация об оплатах, доставках и реализациях</div>
<div class="t" style="left:113px;top:452.25px;font-size:14px;color:#2067b0;border-bottom:1px dashed #2067b0;padding-bottom:1.500px;--w:60;letter-spacing:-0.234px">Добавить</div>
<div class="a" style="left:113px;top:478px;width:462.5px;height:1px;background:#eceff1;border-radius:0px;"></div>
<div class="t" style="left:113px;top:498.00px;font-size:14.5px;color:#c3c7cc;--w:173;letter-spacing:0.151px">Итого к оплате по сделке</div>
<svg class="a" style="left:289.500px;top:499.300px" width="11.600" height="11.600" viewBox="0 0 12 12"><circle cx="6" cy="6" r="6" fill="#c9cdd1"/><text x="6" y="9.300" font-size="9" font-weight="700" text-anchor="middle" fill="#fff" font-family="Liberation Sans, sans-serif">?</text></svg>
<div class="t" style="right:864.8px;top:495.00px;font-size:15.5px;color:#c3c7cc;--w:54.5;letter-spacing:0.513px">1&#8201;500 <span style="color:#a3a9af">₽</span></div>
<div class="t" style="left:97px;top:550.10px;font-size:12.3px;color:#a8adb4;--w:103.4;letter-spacing:0.212px">Дата завершения</div>
<div class="t" style="left:97px;top:569.25px;font-size:15px;color:#424950;--w:121.3;letter-spacing:0.046px">18 февраля 2026</div>
<div class="t" style="left:97px;top:602.10px;font-size:12.3px;color:#a8adb4;--w:41.5;letter-spacing:0.169px">Клиент</div>
<div class="a" style="left:97px;top:620.3px;width:477px;height:80.5px;background:#fff;border-radius:11px;"></div>
<div class="t" style="left:112px;top:642.85px;font-size:10.8px;color:#b4b9be;--w:43;letter-spacing:0.587px">Контакт</div>
<div class="t" style="left:112px;top:656.90px;font-size:15.7px;color:#333;--w:111.3;letter-spacing:0.462px">Антон Пушной</div>
<svg class="a" style="left:472px;top:655.500px" width="17" height="18" viewBox="0 0 17 18" fill="#c5c9cd"><path d="M3.300 3.200c.5-.5 1.300-.4 1.700.2l1.500 2.100c.3.500.3 1.100-.1 1.500l-.9.900c.8 1.600 2 2.800 3.600 3.600l.9-.9c.4-.4 1-.5 1.500-.1l2.100 1.500c.6.400.7 1.200.2 1.700l-1 1c-.8.800-1.900 1-2.900.6C6 13.800 2.800 10.600 1.300 7c-.4-1-.2-2.100.6-2.900z"/><path d="M9 1.200a6.300 6.300 0 0 1 6.300 6.300M9 4a3.500 3.500 0 0 1 3.500 3.500" fill="none" stroke="#c5c9cd" stroke-width="1.500" stroke-linecap="round"/></svg>
<svg class="a" style="left:504.500px;top:657.800px" width="19.500" height="13.500" viewBox="0 0 19.500 13.500" fill="none" stroke="#c5c9cd" stroke-width="1.700" stroke-linejoin="round"><rect x=".9" y=".9" width="17.700" height="11.700" rx="1"/><path d="M1.200 1.400l8.550 6.300 8.550-6.300"/></svg>
<svg class="a" style="left:539px;top:655.800px" width="17.500" height="17.500" viewBox="0 0 17.500 17.500"><path d="M8.500 0a8.500 8.500 0 1 0 5.300 15.100l3.200 1.400-.9-3.300A8.500 8.500 0 0 0 8.500 0z" fill="#c5c9cd"/><path d="M12.300 6.200H4.800l2-2M4.800 10.600h7.500l-2 2" fill="none" stroke="#fff" stroke-width="1.400" stroke-linecap="round" stroke-linejoin="round"/></svg>
<div class="t" style="left:97px;top:720.10px;font-size:13.3px;color:#949ba2;border-bottom:1px dashed #b9bec3;padding-bottom:2px;--w:88;letter-spacing:0.107px">Выбрать поле</div>
<div class="t" style="left:200.6px;top:720.10px;font-size:13.3px;color:#949ba2;border-bottom:1px dashed #b9bec3;padding-bottom:2px;--w:86;letter-spacing:0.193px">Создать поле</div>
<div class="t" style="right:849px;top:720.10px;font-size:13.3px;color:#949ba2;border-bottom:1px dashed #b9bec3;padding-bottom:2px;--w:99.5;letter-spacing:0.151px">Удалить раздел</div>
<div class="a" style="left:82px;top:766px;width:524.5px;height:160px;background:#f7fafb;border-radius:12px;box-shadow:0 2px 6px rgba(70,90,110,.055);"></div>
<div class="t" style="left:97px;top:782.90px;font-size:11.7px;color:#4a5058;font-weight:700;--w:107;letter-spacing:-0.133px">ДОПОЛНИТЕЛЬНО</div>
<div class="t" style="right:849px;top:782.00px;font-size:13.5px;color:#a3a9af;--w:62;letter-spacing:0.408px">изменить</div>
<div class="a" style="left:97px;top:810.5px;width:494px;height:1px;background:#e6eaec;border-radius:0px;"></div>
<div class="t" style="left:97px;top:829.10px;font-size:12.3px;color:#a8adb4;--w:66;letter-spacing:0.291px">Тип сделки</div>
<div class="t" style="left:97px;top:847.25px;font-size:15px;color:#424950;--w:64.5;letter-spacing:0.270px">Продажа</div>
<div class="t" style="left:97px;top:881.10px;font-size:12.3px;color:#a8adb4;--w:72;letter-spacing:0.067px">Дата начала</div>

<div class="a" style="left:642px;top:218px;width:1px;height:700px;background:#dfe4e7;border-radius:0px;"></div>
<div class="a" style="left:658px;top:217.5px;width:12px;height:1px;background:#dfe4e7;border-radius:0px;"></div>
<div class="a" style="left:658px;top:372.2px;width:12px;height:1px;background:#dfe4e7;border-radius:0px;"></div>
<div class="a" style="left:658px;top:467px;width:12px;height:1px;background:#dfe4e7;border-radius:0px;"></div>
<div class="a" style="left:658px;top:701.5px;width:12px;height:1px;background:#dfe4e7;border-radius:0px;"></div>
<div class="a" style="left:658px;top:823px;width:12px;height:1px;background:#dfe4e7;border-radius:0px;"></div>
<div class="a" style="left:670px;top:196px;width:673.5px;height:139px;background:#fff;border-radius:12px;box-shadow:0 2px 6px rgba(70,90,110,.055);"></div>
<svg class="a" style="left:626px;top:202px" width="32" height="32" viewBox="0 0 32 32"><circle cx="16" cy="16" r="16" fill="#25a9f7"/><path d="M9.600 10.800h12.200a.6.600 0 0 1 .6.600v8a.6.600 0 0 1-.6.600H19.500v3.100l-3.500-3.100H9.600a.6.600 0 0 1-.6-.6v-8a.6.600 0 0 1 .6-.6z" fill="#fff"/></svg>
<div class="a" style="left:691.5px;top:209px;width:56.5px;height:31.8px;background:#e8f5fe;border-radius:8px;border:1px solid #c3e6fa;"></div>
<div class="t" style="left:701.5px;top:218.85px;font-size:14.8px;color:#1a6fc0;--w:36;letter-spacing:0.301px">Дело</div>
<div class="t" style="left:762.5px;top:218.85px;font-size:14.8px;color:#8b929a;--w:99.8;letter-spacing:0.600px">Комментарий</div>
<div class="t" style="left:887.5px;top:218.85px;font-size:14.8px;color:#8b929a;--w:83.5;letter-spacing:0.330px">Сообщение</div>
<div class="t" style="left:996.5px;top:206.85px;font-size:7.8px;color:#8b929a;font-weight:700;--w:30.2;letter-spacing:0.359px">НОВОЕ</div>
<div class="t" style="left:996.5px;top:218.85px;font-size:14.8px;color:#8b929a;--w:110.4;letter-spacing:0.468px">Онлайн-запись</div>
<div class="t" style="left:1131.7px;top:218.85px;font-size:14.8px;color:#8b929a;--w:50.2;letter-spacing:0.091px">Задача</div>
<div class="t" style="left:1207.3px;top:218.85px;font-size:14.8px;color:#8b929a;--w:44.4;letter-spacing:-0.083px">Слоты</div>
<div class="t" style="left:1277px;top:218.85px;font-size:14.8px;color:#8b929a;--w:29.2;letter-spacing:-0.303px">Еще</div>
<svg class="a" style="left:1311px;top:223.500px" width="9" height="6" viewBox="0 0 9 6" fill="none" stroke="#a9afb5" stroke-width="1.200" stroke-linecap="round" stroke-linejoin="round"><path d="M1 1l3.500 3.500L8 1"/></svg>
<div class="a" style="left:691.5px;top:262.3px;width:630.5px;height:56.5px;background:#fff;border-radius:9px;border:1px solid #d3d7da;"></div>
<div class="t" style="left:708.8px;top:284.95px;font-size:14.6px;color:#bdc1c6;--w:137;letter-spacing:0.530px">Что нужно сделать</div>
<div class="t" style="left:1230.8px;top:285.95px;font-size:12.6px;color:#7f868e;--w:54.6;letter-spacing:0.075px">действия</div>
<svg class="a" style="left:1291.500px;top:289px" width="9" height="6" viewBox="0 0 9 6" fill="none" stroke="#7f868e" stroke-width="1.200" stroke-linecap="round" stroke-linejoin="round"><path d="M1 1l3.500 3.500L8 1"/></svg>
<div class="a" style="left:670px;top:351px;width:673.5px;height:42px;background:#fff;border-radius:21px;box-shadow:0 2px 6px rgba(70,90,110,.055);"></div>
<svg class="a" style="left:626px;top:356.700px" width="32" height="32" viewBox="0 0 32 32"><circle cx="16" cy="16" r="16" fill="#25a9f7"/><path d="M10.800 10.500h10.400a1.300 1.300 0 0 1 1.300 1.300v6.400a1.300 1.300 0 0 1-1.300 1.300H15.500l-2.700 2.500v-2.500h-2a1.300 1.300 0 0 1-1.300-1.300v-6.400a1.300 1.300 0 0 1 1.300-1.300z" fill="none" stroke="#fff" stroke-width="2" stroke-linejoin="round"/></svg>
<svg class="a" style="left:681.50px;top:361.70px;opacity:1;border-radius:50%;overflow:hidden" width="20" height="20" viewBox="0 0 40 40"><defs><filter id="gb1" x="-20%" y="-20%" width="140%" height="140%"><feGaussianBlur stdDeviation="0.65"/></filter><linearGradient id="gg1" x1="0" x2="1" y1="0" y2="0"><stop offset="0" stop-color="#ead3ad"/><stop offset=".18" stop-color="#dcae72"/><stop offset=".42" stop-color="#c9823f"/><stop offset=".62" stop-color="#d9a473"/><stop offset=".74" stop-color="#b98a5a"/><stop offset=".82" stop-color="#e0c29a"/><stop offset="1" stop-color="#d2ad80"/></linearGradient></defs><rect width="40" height="40" fill="url(#gg1)"/><g filter="url(#gb1)"><path d="M9 8c4-5 14-6 19-1 2 3 2 8 1 12l-3-6c-3-3-8-3-11 1-2 4-2 9-3 14-1 3-5 4-7 2 2-6 1-15 4-22z" fill="#c47b36"/><path d="M6 30c1-8 1-16 5-20 1 6-1 14 1 21z" fill="#d9a35f"/><ellipse cx="23.500" cy="19.500" rx="6" ry="7.800" fill="#ecbd97"/><path d="M19.500 25h7v6h-7z" fill="#e2ac86"/><path d="M2 41c1-8 7-11.500 16-12l4 3 5-3c7 .5 11 4 12 12z" fill="#b9cdea"/><path d="M19.500 31l2.500 5 2.500-5z" fill="#6a2a40"/><path d="M20.500 22.300c1.500 1.200 3.500 1.200 5 0" stroke="#b5655a" stroke-width=".9" fill="none"/><path d="M20 16.800h2.400M24.800 16.800h2.400" stroke="#6a4030" stroke-width="1.300"/><path d="M27.500 6c2 4 2.500 10 1.500 16" stroke="#8a5a30" stroke-width="1.600" fill="none"/><path d="M14 10c-3 5-3 12-4 20" stroke="#a86428" stroke-width="1.500" fill="none"/></g></svg>
<svg class="a" style="left:696.200px;top:361.200px" width="21" height="21" viewBox="0 0 21 21"><circle cx="10.500" cy="10.500" r="10.500" fill="#e4f5fe"/><path d="M10.500 6.300v8.400M6.300 10.500h8.400" stroke="#2fc6f6" stroke-width="1.300" stroke-linecap="round"/></svg>
<div class="t" style="left:725.8px;top:366.10px;font-size:13.3px;color:#c5c9ce;--w:169.4;letter-spacing:0.343px">Пригласить к обсуждению</div>
<div class="a" style="left:642px;top:418px;width:701.5px;height:1px;background:#dfe4e7;border-radius:0px;"></div>
<div class="a" style="left:931.3px;top:408px;width:151px;height:22.2px;background:#10c873;border-radius:11.1px;"></div>
<div class="t" style="left:947.3px;top:414.25px;font-size:12px;color:#fff;font-weight:700;--w:119.4;letter-spacing:0.328px">Что нужно сделать</div>
<div class="a" style="left:670px;top:445.2px;width:673.5px;height:181.3px;background:#fefded;border-radius:12px;box-shadow:0 2px 6px rgba(70,90,110,.055);"></div>
<svg class="a" style="left:626px;top:451.500px" width="32" height="32" viewBox="0 0 32 32"><circle cx="16" cy="16" r="16" fill="#fdbd25"/><circle cx="16" cy="16" r="8" fill="#fff"/><path d="M12.600 16.300l2.300 2.300 4.700-4.900" fill="none" stroke="#f3b01f" stroke-width="1.900" stroke-linecap="round" stroke-linejoin="round"/></svg>
<div class="a" style="left:686.3px;top:460.4px;width:13px;height:12.4px;background:#fff;border-radius:2.5px;border:1.400px solid #6a6a6a;"></div>
<div class="t" style="left:707.7px;top:460.90px;font-size:12.7px;color:#333;font-weight:700;--w:145.2;letter-spacing:0.256px">Связаться с клиентом</div>
<div class="t" style="left:864px;top:460.25px;font-size:13px;color:#c5c9ce;--w:88.5;letter-spacing:0.128px">сегодня, 13:08</div>
<div class="a" style="left:1286px;top:459.5px;width:12px;height:12px;background:#fcc02c;border-radius:2px;"></div>
<svg class="a" style="left:1308.90px;top:455.00px;opacity:1;border-radius:50%;overflow:hidden" width="21.0" height="21.0" viewBox="0 0 40 40"><defs><filter id="gb2" x="-20%" y="-20%" width="140%" height="140%"><feGaussianBlur stdDeviation="0.65"/></filter><linearGradient id="gg2" x1="0" x2="1" y1="0" y2="0"><stop offset="0" stop-color="#ead3ad"/><stop offset=".18" stop-color="#dcae72"/><stop offset=".42" stop-color="#c9823f"/><stop offset=".62" stop-color="#d9a473"/><stop offset=".74" stop-color="#b98a5a"/><stop offset=".82" stop-color="#e0c29a"/><stop offset="1" stop-color="#d2ad80"/></linearGradient></defs><rect width="40" height="40" fill="url(#gg2)"/><g filter="url(#gb2)"><path d="M9 8c4-5 14-6 19-1 2 3 2 8 1 12l-3-6c-3-3-8-3-11 1-2 4-2 9-3 14-1 3-5 4-7 2 2-6 1-15 4-22z" fill="#c47b36"/><path d="M6 30c1-8 1-16 5-20 1 6-1 14 1 21z" fill="#d9a35f"/><ellipse cx="23.500" cy="19.500" rx="6" ry="7.800" fill="#ecbd97"/><path d="M19.500 25h7v6h-7z" fill="#e2ac86"/><path d="M2 41c1-8 7-11.500 16-12l4 3 5-3c7 .5 11 4 12 12z" fill="#b9cdea"/><path d="M19.500 31l2.500 5 2.500-5z" fill="#6a2a40"/><path d="M20.500 22.300c1.500 1.200 3.500 1.200 5 0" stroke="#b5655a" stroke-width=".9" fill="none"/><path d="M20 16.800h2.400M24.800 16.800h2.400" stroke="#6a4030" stroke-width="1.300"/><path d="M27.500 6c2 4 2.500 10 1.500 16" stroke="#8a5a30" stroke-width="1.600" fill="none"/><path d="M14 10c-3 5-3 12-4 20" stroke="#a86428" stroke-width="1.500" fill="none"/></g></svg>
<div class="a" style="left:686.3px;top:488.5px;width:80.6px;height:79.2px;background:#fdedd0;border-radius:10px;"></div>
<div class="a" style="left:701.3px;top:502.7px;width:50.4px;height:50.4px;background:#fff;border-radius:4.5px;border:1px solid #b6e6f8;overflow:hidden;"></div>
<div class="a" style="left:701.3px;top:502.7px;width:50.4px;height:10px;background:#1cc0f3;border-radius:0px;border-radius:4.500px 4.500px 0 0;"></div>
<div class="a" style="left:715px;top:506.500px;width:3px;height:3px;border-radius:2px;background:#9be3fa"></div><div class="a" style="left:735px;top:506.500px;width:3px;height:3px;border-radius:2px;background:#9be3fa"></div>
<div class="t" style="left:716.9px;top:514.75px;font-size:16px;color:#474f5a;font-weight:700;--w:19.8;letter-spacing:1.002px">26</div>
<div class="t" style="left:708.1px;top:533.55px;font-size:6.4px;color:#b0b5ba;font-weight:700;--w:36.5;letter-spacing:0.670px">ФЕВРАЛЯ</div>
<div class="t" style="left:709.6px;top:543.40px;font-size:6.7px;color:#1cc0f3;font-weight:700;--w:33;letter-spacing:0.656px">ЧТ 14:00</div>
<div class="a" style="left:783.1px;top:490px;width:239.6px;height:32.4px;background:#fdedd0;border-radius:6px;"></div>
<div class="t" style="left:794.6px;top:500.25px;font-size:13px;color:#9fa4aa;--w:71.2;letter-spacing:0.173px">Сделать до</div>
<div class="t" style="left:870.2px;top:500.25px;font-size:13px;color:#333;--w:128;letter-spacing:-0.198px">Чт, 26 февраля, 14:00</div>
<svg class="a" style="left:1003px;top:504px" width="9" height="6" viewBox="0 0 9 6" fill="none" stroke="#b5b9be" stroke-width="1.200" stroke-linecap="round" stroke-linejoin="round"><path d="M1 1l3.500 3.500L8 1"/></svg>
<svg class="a" style="left:1031.500px;top:499.500px" width="13" height="14" viewBox="0 0 13 14" fill="#a0a4ab"><path d="M6.500 0c.6 0 1 .4 1 1v.4c2 .5 3.300 2.200 3.300 4.300v2.800l1.400 1.800c.3.400 0 .9-.4.900H1.200c-.5 0-.7-.5-.4-.9l1.400-1.800V5.700c0-2.100 1.300-3.800 3.300-4.300V1c0-.6.400-1 1-1zM4.800 12.200h3.400a1.700 1.700 0 0 1-3.400 0z"/></svg>
<div class="a" style="left:686.3px;top:584.4px;width:127px;height:26.4px;background:#10c7f7;border-radius:13.2px;"></div>
<div class="t" style="left:710.6px;top:592.60px;font-size:11.3px;color:#fff;font-weight:700;--w:78;letter-spacing:0.175px">ВЫПОЛНЕНО</div>
<div class="a" style="left:821.7px;top:584.4px;width:135.2px;height:26.4px;background:#fffef6;border-radius:13.2px;border:1px solid #b9bdc3;"></div>
<div class="t" style="left:837.7px;top:592.60px;font-size:11.3px;color:#4b525c;font-weight:700;--w:102;letter-spacing:0.165px">РЕДАКТИРОВАТЬ</div>
<svg class="a" style="left:1267px;top:591px" width="17" height="17" viewBox="0 0 17 17" fill="none" stroke="#b9bdc3" stroke-width="1.500" stroke-linejoin="round"><path d="M3 1h11a2 2 0 0 1 2 2v8l-5 5H3a2 2 0 0 1-2-2V3a2 2 0 0 1 2-2z"/><path d="M4.500 5h6.500" stroke-linecap="round"/><path d="M16 11h-3a2 2 0 0 0-2 2v3z" fill="#b9bdc3"/></svg>
<div class="a" style="left:1302.7px;top:596.650px;width:5.200px;height:5.200px;border-radius:3px;background:#bfc3c7"></div><div class="a" style="left:1310.5px;top:596.650px;width:5.200px;height:5.200px;border-radius:3px;background:#bfc3c7"></div><div class="a" style="left:1318.4px;top:596.650px;width:5.200px;height:5.200px;border-radius:3px;background:#bfc3c7"></div>
<div class="a" style="left:642px;top:652px;width:701.5px;height:1px;background:#dfe4e7;border-radius:0px;"></div>
<div class="a" style="left:965.2px;top:641.9px;width:83px;height:22.3px;background:#2fabf7;border-radius:11.2px;"></div>
<div class="t" style="left:980.6px;top:648.05px;font-size:12.4px;color:#fff;font-weight:700;--w:52;letter-spacing:0.167px">Сегодня</div>
<div class="a" style="left:1256px;top:642.2px;width:87.5px;height:22.2px;background:#f8fafb;border-radius:11.1px;"></div>
<svg class="a" style="left:1266.500px;top:648.300px" width="11" height="10" viewBox="0 0 11 10" fill="#a8adb4"><path d="M.3 0h10.400c.3 0 .4.300.2.500L6.800 5v4.200c0 .3-.3.500-.6.300L4.600 8.500a.5.500 0 0 1-.3-.4V5L.1.500C-.1.300 0 0 .3 0z"/></svg>
<div class="t" style="left:1283.3px;top:648.60px;font-size:10.3px;color:#a8adb4;font-weight:700;--w:45;letter-spacing:0.344px">ФИЛЬТР</div>
<div class="a" style="left:670px;top:679.4px;width:673.5px;height:68.7px;background:#fff;border-radius:12px;box-shadow:0 2px 6px rgba(70,90,110,.055);"></div>
<svg class="a" style="left:626px;top:685.900px" width="32" height="32" viewBox="0 0 32 32"><circle cx="16" cy="16" r="16" fill="#fff"/><circle cx="16" cy="16" r="8" fill="#bfc3c8"/><path d="M12.500 16.200l2.500 2.500 4.600-4.800" fill="none" stroke="#fff" stroke-width="2" stroke-linecap="round" stroke-linejoin="round"/></svg>
<div class="t" style="left:686.5px;top:694.90px;font-size:12.7px;color:#a8adb4;font-weight:700;--w:145.2;letter-spacing:0.256px">Связаться с клиентом</div>
<div class="t" style="left:843.1px;top:694.25px;font-size:13px;color:#c5c9ce;--w:31.3;letter-spacing:-0.249px">13:08</div>
<div class="t" style="left:686.5px;top:720.10px;font-size:13.3px;color:#a3a9af;--w:84.3;letter-spacing:0.153px">Дата и время</div>
<div class="t" style="left:775.4px;top:719.95px;font-size:13.6px;color:#555c63;--w:136.5;letter-spacing:-0.080px">Чт, 26 февраля, 14:00</div>
<svg class="a" style="left:1308.90px;top:689.50px;opacity:0.45;border-radius:50%;overflow:hidden" width="21.0" height="21.0" viewBox="0 0 40 40"><defs><filter id="gb3" x="-20%" y="-20%" width="140%" height="140%"><feGaussianBlur stdDeviation="0.65"/></filter><linearGradient id="gg3" x1="0" x2="1" y1="0" y2="0"><stop offset="0" stop-color="#ead3ad"/><stop offset=".18" stop-color="#dcae72"/><stop offset=".42" stop-color="#c9823f"/><stop offset=".62" stop-color="#d9a473"/><stop offset=".74" stop-color="#b98a5a"/><stop offset=".82" stop-color="#e0c29a"/><stop offset="1" stop-color="#d2ad80"/></linearGradient></defs><rect width="40" height="40" fill="url(#gg3)"/><g filter="url(#gb3)"><path d="M9 8c4-5 14-6 19-1 2 3 2 8 1 12l-3-6c-3-3-8-3-11 1-2 4-2 9-3 14-1 3-5 4-7 2 2-6 1-15 4-22z" fill="#c47b36"/><path d="M6 30c1-8 1-16 5-20 1 6-1 14 1 21z" fill="#d9a35f"/><ellipse cx="23.500" cy="19.500" rx="6" ry="7.800" fill="#ecbd97"/><path d="M19.500 25h7v6h-7z" fill="#e2ac86"/><path d="M2 41c1-8 7-11.500 16-12l4 3 5-3c7 .5 11 4 12 12z" fill="#b9cdea"/><path d="M19.500 31l2.500 5 2.500-5z" fill="#6a2a40"/><path d="M20.500 22.300c1.500 1.200 3.500 1.200 5 0" stroke="#b5655a" stroke-width=".9" fill="none"/><path d="M20 16.800h2.400M24.800 16.800h2.400" stroke="#6a4030" stroke-width="1.300"/><path d="M27.500 6c2 4 2.500 10 1.500 16" stroke="#8a5a30" stroke-width="1.600" fill="none"/><path d="M14 10c-3 5-3 12-4 20" stroke="#a86428" stroke-width="1.500" fill="none"/></g></svg>
<div class="a" style="left:642px;top:774px;width:701.5px;height:1px;background:#dfe4e7;border-radius:0px;"></div>
<div class="a" style="left:956.7px;top:764.2px;width:100px;height:21.6px;background:#dfe5e8;border-radius:10.8px;"></div>
<div class="t" style="left:972.3px;top:770.05px;font-size:12.4px;color:#555c63;font-weight:700;--w:69.2;letter-spacing:-0.210px">11 февраля</div>
<div class="a" style="left:670px;top:801px;width:673.5px;height:87px;background:#fff;border-radius:12px;box-shadow:0 2px 6px rgba(70,90,110,.055);"></div>
<svg class="a" style="left:626px;top:807.300px" width="32" height="32" viewBox="0 0 32 32"><circle cx="16" cy="16" r="16" fill="#fff"/><path d="M21.800 9H10.200l5.600 7-5.600 7.200H22.200" fill="none" stroke="#b4b9be" stroke-width="2" stroke-linejoin="miter"/></svg>
<div class="t" style="left:686.5px;top:820.90px;font-size:12.7px;color:#a8adb4;font-weight:700;--w:207.3;letter-spacing:0.340px">Изменён режим расчёта суммы</div>
<svg class="a" style="left:900.400px;top:821px" width="12" height="12" viewBox="0 0 12 12"><circle cx="6" cy="6" r="6" fill="#c9cdd1"/><text x="6" y="9.300" font-size="9" font-weight="700" text-anchor="middle" fill="#fff" font-family="Liberation Sans, sans-serif">?</text></svg>
<div class="t" style="left:924.4px;top:820.25px;font-size:13px;color:#c5c9ce;--w:30.2;letter-spacing:-0.469px">12:41</div>
<div class="a" style="left:686.5px;top:848px;width:195.2px;height:21.3px;background:#f0f2f3;border-radius:10.7px;"></div>
<div class="t" style="left:694.6px;top:853.15px;font-size:12.2px;color:#4b525a;--w:179;letter-spacing:0.356px">На основе стоимости товаров</div>
<svg class="a" style="left:886.800px;top:855.500px" width="9" height="7" viewBox="0 0 9 7" fill="none" stroke="#a8adb4" stroke-width="1" stroke-linecap="round" stroke-linejoin="round"><path d="M.5 3.500h7.500M5.500 1l2.500 2.500L5.500 6"/></svg>
<div class="a" style="left:901.5px;top:848px;width:68.2px;height:21.3px;background:#f0f2f3;border-radius:10.7px;"></div>
<div class="t" style="left:909.8px;top:853.15px;font-size:12.2px;color:#4b525a;--w:51.5;letter-spacing:0.330px">Вручную</div>
<svg class="a" style="left:1308.90px;top:811.50px;opacity:0.45;border-radius:50%;overflow:hidden" width="21.0" height="21.0" viewBox="0 0 40 40"><defs><filter id="gb4" x="-20%" y="-20%" width="140%" height="140%"><feGaussianBlur stdDeviation="0.65"/></filter><linearGradient id="gg4" x1="0" x2="1" y1="0" y2="0"><stop offset="0" stop-color="#ead3ad"/><stop offset=".18" stop-color="#dcae72"/><stop offset=".42" stop-color="#c9823f"/><stop offset=".62" stop-color="#d9a473"/><stop offset=".74" stop-color="#b98a5a"/><stop offset=".82" stop-color="#e0c29a"/><stop offset="1" stop-color="#d2ad80"/></linearGradient></defs><rect width="40" height="40" fill="url(#gg4)"/><g filter="url(#gb4)"><path d="M9 8c4-5 14-6 19-1 2 3 2 8 1 12l-3-6c-3-3-8-3-11 1-2 4-2 9-3 14-1 3-5 4-7 2 2-6 1-15 4-22z" fill="#c47b36"/><path d="M6 30c1-8 1-16 5-20 1 6-1 14 1 21z" fill="#d9a35f"/><ellipse cx="23.500" cy="19.500" rx="6" ry="7.800" fill="#ecbd97"/><path d="M19.500 25h7v6h-7z" fill="#e2ac86"/><path d="M2 41c1-8 7-11.500 16-12l4 3 5-3c7 .5 11 4 12 12z" fill="#b9cdea"/><path d="M19.500 31l2.500 5 2.500-5z" fill="#6a2a40"/><path d="M20.500 22.300c1.500 1.200 3.500 1.200 5 0" stroke="#b5655a" stroke-width=".9" fill="none"/><path d="M20 16.800h2.400M24.800 16.800h2.400" stroke="#6a4030" stroke-width="1.300"/><path d="M27.500 6c2 4 2.500 10 1.500 16" stroke="#8a5a30" stroke-width="1.600" fill="none"/><path d="M14 10c-3 5-3 12-4 20" stroke="#a86428" stroke-width="1.500" fill="none"/></g></svg>

</div></div>
</div>
</body>
</html>
